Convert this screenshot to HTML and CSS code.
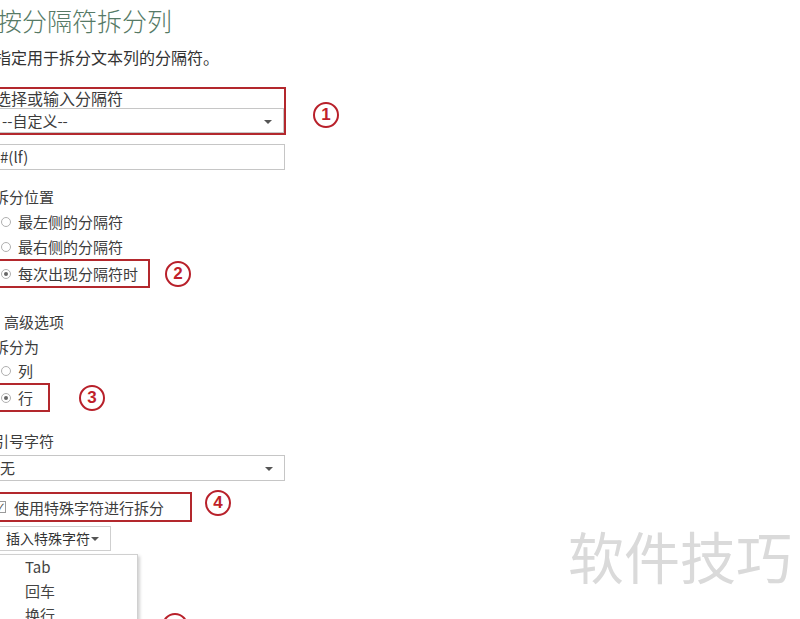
FILE: index.html
```html
<!DOCTYPE html>
<html lang="zh-CN">
<head>
  <meta charset="UTF-8">
  <title>按分隔符拆分列</title>
  <link rel="stylesheet" href="styles.css">
</head>
<body>
  <div class="page">
    <h1 class="title">按分隔符拆分列</h1>
    <p class="desc">指定用于拆分文本列的分隔符。</p>

    <div class="mark-row mark-sep">
      <div class="redbox box-sep">
        <div class="label">选择或输入分隔符</div>
        <div class="select select-in">--自定义--<span class="caret"></span></div>
      </div>
      <span class="badge badge-1">1</span>
    </div>

    <div class="input">#(lf)</div>

    <div class="label label-pos">拆分位置</div>
    <div class="radio-row"><span class="radio"></span>最左侧的分隔符</div>
    <div class="radio-row"><span class="radio"></span>最右侧的分隔符</div>
    <div class="mark-row">
      <div class="redbox">
        <div class="radio-row radio-boxed"><span class="radio on"></span>每次出现分隔符时</div>
      </div>
      <span class="badge badge-2">2</span>
    </div>

    <div class="label label-adv">高级选项</div>
    <div class="label label-as">拆分为</div>
    <div class="radio-row"><span class="radio"></span>列</div>
    <div class="mark-row">
      <div class="redbox box-row">
        <div class="radio-row radio-boxed"><span class="radio on"></span>行</div>
      </div>
      <span class="badge badge-3">3</span>
    </div>

    <div class="label label-quote">引号字符</div>
    <div class="select select-quote">无<span class="caret"></span></div>

    <div class="mark-row mark-check">
      <div class="redbox box-check">
        <div class="check-row"><span class="checkbox">✓</span>使用特殊字符进行拆分</div>
      </div>
      <span class="badge badge-4">4</span>
    </div>

    <div class="insert-btn">插入特殊字符<span class="caret"></span></div>

    <div class="menu-row">
      <ul class="menu">
        <li>Tab</li>
        <li>回车</li>
        <li>换行</li>
      </ul>
      <span class="badge badge-5">5</span>
    </div>
  </div>

  <div class="watermark">软件技巧</div>
</body>
</html>
```

FILE: styles.css
```css
* {
  box-sizing: border-box;
}

html, body {
  margin: 0;
  height: 100%;
  overflow: hidden;
  background: #ffffff;
}

body {
  font-family: "Noto Sans CJK SC", "Noto Sans", sans-serif;
  color: #3c3c3c;
  position: relative;
}

.page {
  margin-left: -8px;
  padding-top: 3px;
  width: 400px;
}

.title {
  margin: 0;
  padding-left: 5px;
  font-size: 25px;
  line-height: 34px;
  font-weight: 300;
  color: #567a66;
}

.desc {
  margin: 9px 0 0;
  padding-left: 3px;
  font-size: 16px;
  line-height: 22px;
  color: #333;
}

.label {
  font-size: 15px;
  line-height: 20px;
  padding-left: 2px;
  color: #3c3c3c;
}

.mark-row {
  display: flex;
  align-items: center;
}

.redbox {
  border: 2px solid #b3282d;
}

.mark-sep {
  margin-top: 19px;
}

.box-sep {
  width: 294px;
}

.box-sep .label {
  font-size: 16px;
  line-height: 18px;
  padding-left: 1px;
}

.select {
  position: relative;
  height: 26px;
  border: 1px solid #c6c6c6;
  font-size: 15px;
  line-height: 24px;
  padding-left: 7px;
  background: #fff;
}

.select-in {
  margin-top: 1px;
  height: 25px;
}

.caret {
  position: absolute;
  right: 11px;
  top: 11px;
  width: 0;
  height: 0;
  border-left: 4px solid transparent;
  border-right: 4px solid transparent;
  border-top: 4px solid #555;
}

.badge {
  width: 26px;
  height: 26px;
  border: 2.5px solid #b8202a;
  border-radius: 50%;
  color: #c01f2a;
  font-family: "Liberation Sans", Arial, sans-serif;
  font-weight: bold;
  font-size: 17px;
  line-height: 21px;
  text-align: center;
  flex: none;
}

.badge-1 {
  margin-left: 27px;
  margin-top: 8px;
}

.badge-2 {
  margin-left: 15px;
}

.badge-3 {
  margin-left: 29px;
}

.badge-4 {
  margin-left: 13px;
  align-self: flex-start;
  margin-top: -2px;
}

.input {
  margin-top: 9px;
  width: 293px;
  height: 26px;
  border: 1px solid #c6c6c6;
  font-size: 15px;
  line-height: 24px;
  padding-left: 7px;
}

.label-pos {
  margin-top: 17px;
}

.radio-row {
  display: flex;
  align-items: center;
  height: 25px;
  padding-left: 9px;
  font-size: 15px;
  color: #3c3c3c;
}

.label-pos + .radio-row {
  margin-top: 2px;
}

.radio-boxed {
  padding-left: 7px;
  padding-right: 10px;
}

.radio {
  width: 10px;
  height: 10px;
  border: 1px solid #b0b0b0;
  border-radius: 50%;
  margin-right: 7px;
  position: relative;
  flex: none;
}

.radio.on::after {
  content: "";
  position: absolute;
  left: 2px;
  top: 2px;
  width: 4px;
  height: 4px;
  border-radius: 50%;
  background: #666;
}

.label-adv {
  margin-top: 24px;
  padding-left: 12px;
}

.label-as {
  margin-top: 5px;
}

.label-as + .radio-row {
  margin-top: 1px;
}

.box-row {
  width: 58px;
}

.label-quote {
  margin-top: 19px;
}

.select-quote {
  margin-top: 4px;
  width: 293px;
}

.mark-check {
  margin-top: 11px;
}

.box-check {
  width: 200px;
}

.check-row {
  display: flex;
  align-items: center;
  height: 26px;
  font-size: 15px;
}

.checkbox {
  width: 12px;
  height: 12px;
  border: 1px solid #9a9a9a;
  margin-right: 8px;
  font-size: 11px;
  line-height: 10px;
  text-align: center;
  color: #444;
  flex: none;
}

.insert-btn {
  position: relative;
  margin-top: 4px;
  width: 119px;
  height: 25px;
  border: 1px solid #cfcfcf;
  font-size: 14px;
  line-height: 23px;
  padding-left: 13px;
  color: #333;
}

.insert-btn .caret {
  right: 11px;
  top: 10px;
}

.menu-row {
  display: flex;
  align-items: flex-start;
  margin-top: 3px;
}

.menu {
  list-style: none;
  margin: 0;
  padding: 0;
  width: 146px;
  height: 80px;
  border: 1px solid #d0d0d0;
  box-shadow: 2px 2px 3px rgba(0, 0, 0, 0.18);
  background: #fff;
}

.menu li {
  height: 24px;
  line-height: 24px;
  padding-left: 32px;
  font-size: 15px;
  color: #444;
}

.badge-5 {
  margin-left: 24px;
  margin-top: 59px;
}

.watermark {
  position: absolute;
  left: 568px;
  top: 525px;
  font-size: 56px;
  line-height: 60px;
  color: #dadada;
  white-space: nowrap;
}
```
